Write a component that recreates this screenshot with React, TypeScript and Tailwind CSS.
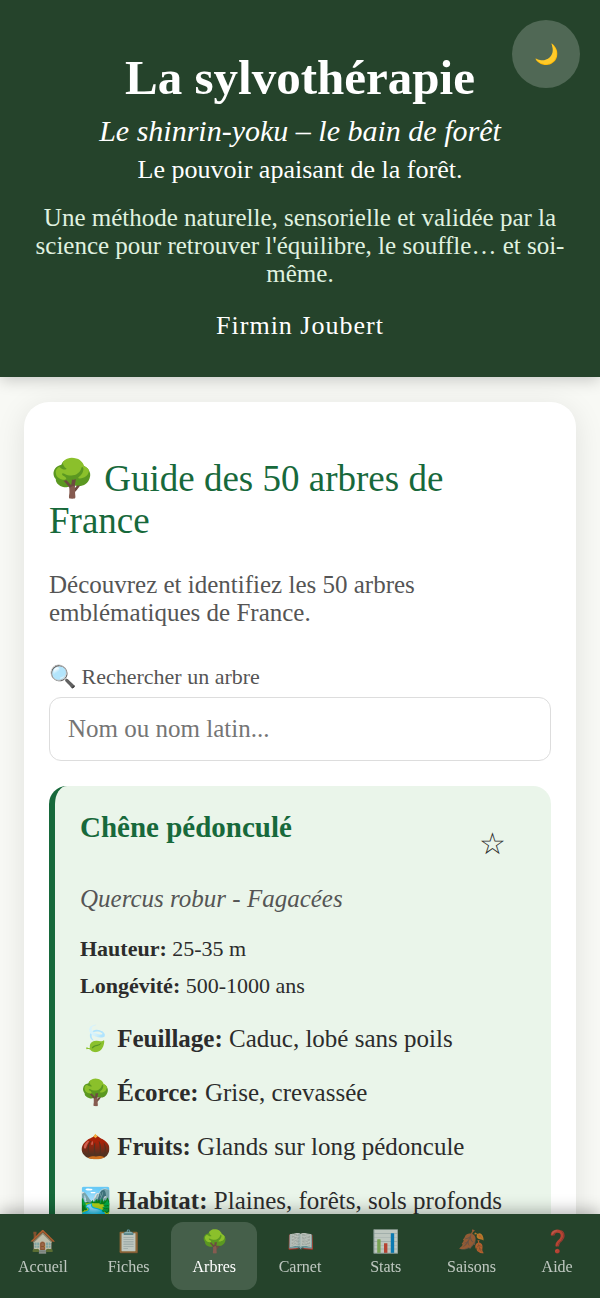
import { useState } from "react";
import clsx from "clsx";

const details = [
  { icon: "🍃", label: "Feuillage:", value: "Caduc, lobé sans poils" },
  { icon: "🌳", label: "Écorce:", value: "Grise, crevassée" },
  { icon: "🌰", label: "Fruits:", value: "Glands sur long pédoncule" },
  { icon: "🏞️", label: "Habitat:", value: "Plaines, forêts, sols profonds" },
];

const tabs = [
  { icon: "🏠", label: "Accueil" },
  { icon: "📋", label: "Fiches" },
  { icon: "🌳", label: "Arbres" },
  { icon: "📖", label: "Carnet" },
  { icon: "📊", label: "Stats" },
  { icon: "🍂", label: "Saisons" },
  { icon: "❓", label: "Aide" },
];

const Header = () => (
  <header className="relative bg-[#25432b] px-8 pt-12 pb-[37px] text-center text-white shadow-[0_3px_15px_rgba(0,0,0,0.2)]">
    <button
      type="button"
      aria-label="Mode sombre"
      className="absolute top-5 right-5 flex size-[68px] items-center justify-center rounded-full bg-white/20 text-[20px] leading-none"
    >
      🌙
    </button>
    <h1 className="text-[49px] leading-[60px] font-bold">La sylvothérapie</h1>
    <p className="mt-1 text-[30px] leading-[38px] italic">Le shinrin-yoku – le bain de forêt</p>
    <p className="mt-1 text-[26px] leading-[32px]">Le pouvoir apaisant de la forêt.</p>
    <p className="mt-[18px] text-[25px] leading-[28px] text-[#e0f2e0]">
      Une méthode naturelle, sensorielle et validée par la science pour retrouver
      l'équilibre, le souffle… et soi-même.
    </p>
    <p className="mt-6 text-[26px] leading-[28px] tracking-[1px]">Firmin Joubert</p>
  </header>
);

const TreeCard = () => {
  const [favorite, setFavorite] = useState(false);

  return (
    <article className="rounded-[18px] border-l-[6px] border-[#17693b] bg-[#eaf5ea] p-[25px] text-[#2c2c2c]">
      <div className="flex items-start justify-between">
        <h3 className="text-[29px] leading-[32px] font-bold text-[#17693b]">Chêne pédonculé</h3>
        <button
          type="button"
          aria-label="Ajouter aux favoris"
          onClick={() => setFavorite(!favorite)}
          className="flex h-[66px] w-[68px] items-center justify-center text-[30px] leading-none"
        >
          {favorite ? "★" : "☆"}
        </button>
      </div>
      <p className="mt-2 text-[25px] leading-[28px] text-[#555] italic">Quercus robur - Fagacées</p>
      <div className="mt-[17px] text-[22px] leading-[37px]">
        <p>
          <strong>Hauteur:</strong> 25-35 m
        </p>
        <p>
          <strong>Longévité:</strong> 500-1000 ans
        </p>
      </div>
      <div className="mt-5 flex flex-col gap-6 text-[25px] leading-[30px]">
        {details.map((item) => (
          <p key={item.label}>
            {item.icon} <strong>{item.label}</strong> {item.value}
          </p>
        ))}
      </div>
    </article>
  );
};

const BottomNav = () => {
  const [active, setActive] = useState("Arbres");

  return (
    <nav className="fixed inset-x-0 bottom-0 flex bg-[#25432b] pt-2 pb-2 shadow-[0_-3px_15px_rgba(0,0,0,0.3)]">
      {tabs.map((tab) => (
        <button
          key={tab.label}
          type="button"
          onClick={() => setActive(tab.label)}
          className={clsx(
            "flex h-[68px] flex-1 flex-col items-center rounded-xl pt-[5px] text-white",
            active === tab.label ? "bg-white/15" : "opacity-70"
          )}
        >
          <span className="text-[22px] leading-[30px]">{tab.icon}</span>
          <span className="text-[16px] leading-[20px]">{tab.label}</span>
        </button>
      ))}
    </nav>
  );
};

const App = () => {
  return (
    <div className="min-h-screen bg-[#f8f9f5] font-['Liberation_Serif',serif]">
      <Header />
      <main className="px-6 pt-[25px]">
        <section className="rounded-[25px] bg-white px-[25px] pt-14 pb-6 shadow-[0_6px_30px_rgba(0,0,0,0.1)]">
          <h2 className="text-[37px] leading-[42px] text-[#17693b]">🌳 Guide des 50 arbres de France</h2>
          <p className="mt-[29px] text-[25px] leading-[28px] text-[#555]">
            Découvrez et identifiez les 50 arbres emblématiques de France.
          </p>
          <label htmlFor="search" className="mt-9 block text-[22px] leading-[28px] text-[#555]">
            🔍 Rechercher un arbre
          </label>
          <input
            id="search"
            type="text"
            placeholder="Nom ou nom latin..."
            className="mt-[6px] mb-[25px] block h-16 w-full rounded-xl border border-[#ddd] bg-white px-[18px] text-[25px] placeholder:text-[#757575]"
          />
          <TreeCard />
        </section>
      </main>
      <BottomNav />
    </div>
  );
};

export default App;
